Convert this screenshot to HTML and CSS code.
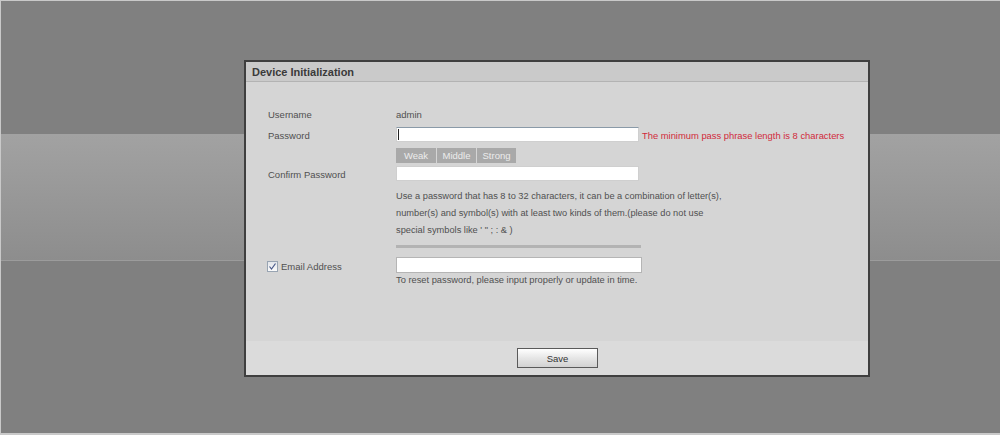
FILE: index.html
```html
<!DOCTYPE html>
<html lang="en">
<head>
<meta charset="utf-8">
<title>Device Initialization</title>
<link rel="stylesheet" href="styles.css">
</head>
<body>
<div class="page">
  <div class="dialog">
    <div class="dlg-head">Device Initialization</div>
    <div class="dlg-body">
      <div class="row row-user">
        <span class="label">Username</span>
        <span class="value">admin</span>
      </div>
      <div class="row row-pass">
        <span class="label">Password</span>
        <div class="field field-focus"><span class="caret"></span></div>
        <span class="error">The minimum pass phrase length is 8 characters</span>
      </div>
      <div class="row row-strength">
        <span class="label"></span>
        <div class="strength">
          <span class="lvl lvl-weak">Weak</span>
          <span class="lvl">Middle</span>
          <span class="lvl">Strong</span>
        </div>
      </div>
      <div class="row row-confirm">
        <span class="label label-low">Confirm Password</span>
        <div class="field"></div>
      </div>
      <div class="row row-help">
        <span class="label"></span>
        <p class="help">Use a password that has 8 to 32 characters, it can be a combination of letter(s),<br>number(s) and symbol(s) with at least two kinds of them.(please do not use<br>special symbols like ' " ; : &amp; )</p>
      </div>
      <div class="row row-divider">
        <span class="label"></span>
        <div class="divider"></div>
      </div>
      <div class="row row-email">
        <label class="label check-label"><span class="checkbox"><svg width="9" height="9" viewBox="0 0 9 9"><path d="M1.5 4.5 L3.5 7 L7.5 1.5" fill="none" stroke="#4a5a8a" stroke-width="1.2"/></svg></span>Email Address</label>
        <div class="field field-email"></div>
      </div>
      <div class="row row-hint">
        <span class="label"></span>
        <span class="hint">To reset password, please input properly or update in time.</span>
      </div>
    </div>
    <div class="dlg-foot">
      <button class="btn-save" type="button">Save</button>
    </div>
  </div>
</div>
</body>
</html>
```

FILE: styles.css
```css
html, body {
  margin: 0;
  padding: 0;
}
body {
  background: #c9c9c9;
  font-family: "Liberation Sans", Arial, sans-serif;
  width: 1000px;
  height: 435px;
  overflow: hidden;
}
.page {
  margin: 1px 0 0 1px;
  height: 432px;
  overflow: hidden;
  background: linear-gradient(to bottom,
    #808080 0, #808080 133px,
    #a2a2a2 133px, #8d8d8d 259px,
    #9c9c9c 259px, #9c9c9c 260px,
    #808080 260px, #808080 100%);
  padding-top: 59px;
  box-sizing: border-box;
}
.dialog {
  margin-left: 243px;
  width: 622px;
  border: 2px solid #3f3f3f;
  background: #d5d5d5;
}
.dlg-head {
  height: 19px;
  line-height: 20px;
  background: #cacaca;
  border-bottom: 1px solid #b3b3b3;
  padding-left: 6px;
  font-size: 11px;
  font-weight: bold;
  color: #3a3a3a;
}
.dlg-body {
  height: 259px;
  box-sizing: border-box;
  padding: 24px 0 0 22px;
  font-size: 9.5px;
  color: #505050;
}
.row {
  display: flex;
  align-items: center;
}
.label {
  width: 128px;
  flex: none;
}
.label-low {
  padding-top: 2px;
}
.row-user { height: 16px; }
.row-pass { margin-top: 5px; height: 15px; }
.row-pass .label { padding-top: 1px; }
.row-strength { margin-top: 6px; height: 15px; }
.row-confirm { margin-top: 3px; height: 15px; }
.row-help { margin-top: 7px; align-items: flex-start; }
.row-divider { margin-top: 6px; }
.row-email { margin-top: 9px; height: 16px; }
.row-hint { height: 14px; }

.field {
  width: 243px;
  height: 15px;
  box-sizing: border-box;
  background: #fff;
  border: 1px solid #cfcfcf;
  position: relative;
}
.field-focus {
  border-top-color: #8a9aa8;
}
.field-email {
  width: 246px;
  height: 16px;
  border-color: #b5b5b5;
}
.caret {
  position: absolute;
  left: 1px;
  top: 1px;
  width: 1px;
  height: 11px;
  background: #222;
}
.error {
  margin-left: 3px;
  color: #d12a3b;
  white-space: nowrap;
  font-size: 9.4px;
  padding-top: 1px;
}
.strength {
  display: flex;
  gap: 1px;
  height: 15px;
}
.lvl {
  width: 39px;
  background: #a9a9a9;
  color: #ececec;
  text-align: center;
  line-height: 16px;
}
.lvl-weak { width: 40px; }
.help {
  margin: 0;
  line-height: 17px;
  white-space: nowrap;
  font-size: 9.25px;
}
.divider {
  width: 245px;
  height: 3px;
  background: #b3b3b3;
}
.check-label {
  display: flex;
  align-items: center;
  margin-left: -1px;
  width: 129px;
  padding-top: 2px;
}
.checkbox {
  width: 9px;
  height: 9px;
  border: 1px solid #98a4b2;
  background: linear-gradient(#e3e6eb, #fbfbfb);
  margin-right: 3px;
  display: flex;
  align-items: center;
  justify-content: center;
}
.hint {
  line-height: 14px;
  white-space: nowrap;
  font-size: 9.3px;
}
.dlg-foot {
  height: 34px;
  box-sizing: border-box;
  background: #dbdbdb;
  padding-top: 7px;
  display: flex;
  justify-content: center;
}
.btn-save {
  width: 81px;
  height: 20px;
  margin: 0 0 0 1px;
  padding: 0;
  border: 1px solid #5a5a5a;
  background: linear-gradient(#ffffff, #e6e6e6 50%, #d2d2d2);
  font-family: "Liberation Sans", Arial, sans-serif;
  font-size: 9.5px;
  color: #333;
}
```
